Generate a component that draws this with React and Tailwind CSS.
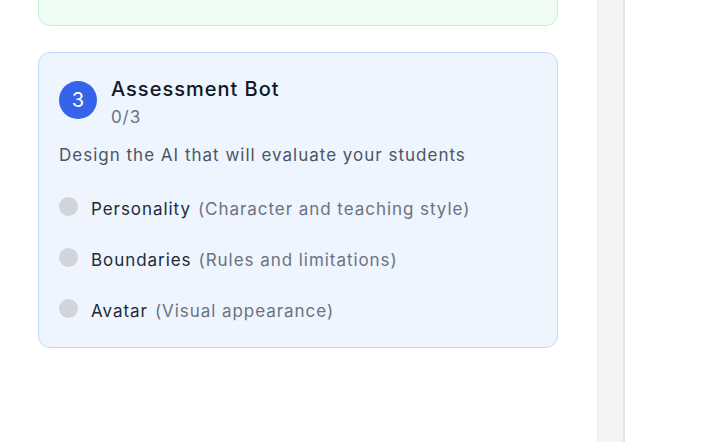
import React from 'react';

const steps = [
    { name: 'Personality', hint: '(Character and teaching style)' },
    { name: 'Boundaries', hint: '(Rules and limitations)' },
    { name: 'Avatar', hint: '(Visual appearance)' },
];

const App = () => {
    return (
        <div className="flex h-[442px] w-[708px] overflow-hidden bg-white" style={{ fontFamily: 'Inter, "Noto Sans", sans-serif' }}>
            <div className="w-[597px] shrink-0 pl-[38px] pr-[39px]">
                {/* previous step card, scrolled mostly out of view */}
                <div className="-mt-[75px] h-[101px] rounded-xl border border-[#c6f1d3] bg-[#f0fdf4]"></div>

                <div className="mt-[26px] rounded-xl border border-[#c3dafb] bg-[#eef5fe] px-5 pt-[22px] pb-[24px]">
                    <div className="flex items-start gap-[14px]">
                        <div className="mt-[6px] flex h-[38px] w-[38px] items-center justify-center rounded-full bg-[#3563e9] text-[20px] text-white">3</div>
                        <div className="flex flex-col">
                            <h2 className="text-[20px] leading-[28px] font-medium tracking-[1px] text-[#111827]">Assessment Bot</h2>
                            <span className="mt-[2px] text-[17px] leading-6 tracking-[0.9px] text-[#6b7280]">0/3</span>
                        </div>
                    </div>
                    <p className="mt-[14px] text-[17px] leading-6 tracking-[1px] text-[#4b5563]">Design the AI that will evaluate your students</p>
                    <ul className="mt-[30px] flex flex-col gap-[27px]">
                        {steps.map((s) => (
                            <li key={s.name} className="flex items-start gap-[13px]">
                                <span className="h-[19px] w-[19px] shrink-0 rounded-full bg-[#d1d5db]"></span>
                                <span className="text-[17px] leading-6 tracking-[0.95px]">
                                    <span className="text-[#1f2937]">{s.name}</span>
                                    <span className="ml-[7px] text-[#6b7280]">{s.hint}</span>
                                </span>
                            </li>
                        ))}
                    </ul>
                </div>
            </div>
            <div className="h-full w-[28px] shrink-0 border-l border-r-2 border-l-[#ececef] border-r-[#e3e4e8] bg-[#f3f4f6]"></div>
            <div className="flex-1 bg-white"></div>
        </div>
    );
};

export default App;
